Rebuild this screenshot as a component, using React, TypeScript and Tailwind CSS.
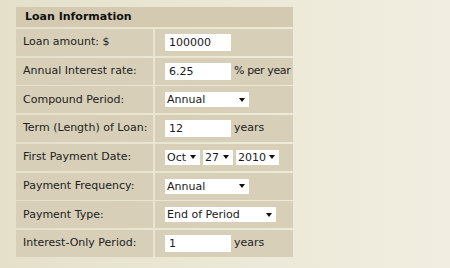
import React from "react";

// Loan information form, rendered as a two-column table of labelled rows.

function Caret() {
	return (
		<svg viewBox="0 0 6 4" className="w-[6px] h-[4px] shrink-0">
			<path d="M0 0h6L3 4z" fill="#111" />
		</svg>
	);
}

function Select({ value, width }: { value: string; width: string }) {
	return (
		<div
			className={`${width} h-[15px] shrink-0 bg-white flex items-center justify-between pl-[2px] pr-[4px] text-[#1a1a1a]`}
		>
			<span className="leading-none whitespace-nowrap">{value}</span>
			<Caret />
		</div>
	);
}

function TextInput({ value }: { value: string }) {
	return (
		<input
			readOnly
			value={value}
			className="w-[66px] h-[17px] shrink-0 bg-white px-[4px] text-[11px] text-[#1a1a1a] outline-none border-0"
			style={{ fontFamily: "inherit" }}
		/>
	);
}

function Row({ label, children }: { label: string; children: React.ReactNode }) {
	return (
		<>
			<div className="h-[27px] bg-[#d7cfb8] flex items-center pl-[7px] text-[#222] whitespace-nowrap">
				{label}
			</div>
			<div className="h-[27px] bg-[#d7cfb8] flex items-center pl-[10px] gap-[3px] text-[#222] whitespace-nowrap">
				{children}
			</div>
		</>
	);
}

export default function App() {
	return (
		<div
			className="w-[450px] h-[268px] bg-gradient-to-r from-[#e4e0ca] via-[#ebe8d6] to-[#f1eee1] pt-[7px] pl-[16px] text-[11px]"
			style={{ fontFamily: '"DejaVu Sans", Verdana, sans-serif' }}
		>
			<div className="w-[277px] flex flex-col gap-[1.75px]">
				<div className="h-[20px] bg-[#d3cab1] flex items-center pl-[9px] font-bold text-[#111]">
					Loan Information
				</div>
				<div className="grid grid-cols-[137px_138px] gap-x-[2px] gap-y-[1.75px]">
					<Row label="Loan amount: $">
						<TextInput value="100000" />
					</Row>
					<Row label="Annual Interest rate:">
						<TextInput value="6.25" />
						<span className="tracking-[-0.4px]">% per year</span>
					</Row>
					<Row label="Compound Period:">
						<Select value="Annual" width="w-[84px]" />
					</Row>
					<Row label="Term (Length) of Loan:">
						<TextInput value="12" />
						<span>years</span>
					</Row>
					<Row label="First Payment Date:">
						<div className="flex items-center gap-[3px]">
							<Select value="Oct" width="w-[35px]" />
							<Select value="27" width="w-[30px]" />
							<Select value="2010" width="w-[43px]" />
						</div>
					</Row>
					<Row label="Payment Frequency:">
						<Select value="Annual" width="w-[84px]" />
					</Row>
					<Row label="Payment Type:">
						<Select value="End of Period" width="w-[111px]" />
					</Row>
					<Row label="Interest-Only Period:">
						<TextInput value="1" />
						<span>years</span>
					</Row>
				</div>
			</div>
		</div>
	);
}
